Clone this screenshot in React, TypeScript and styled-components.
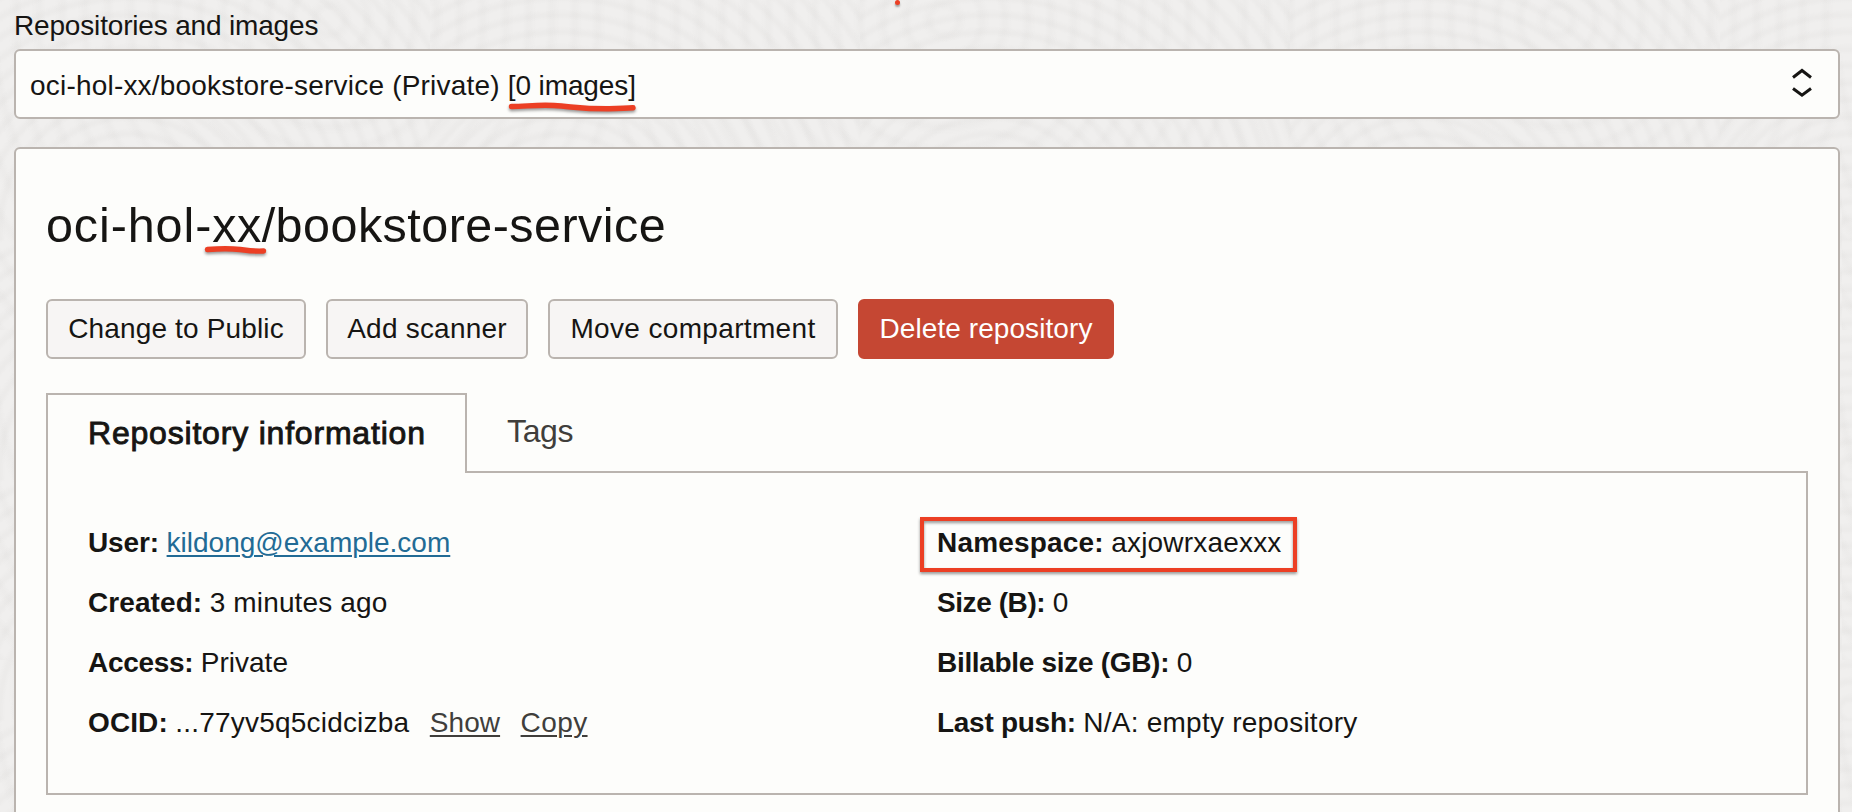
import React from 'react';
import styled, { createGlobalStyle } from 'styled-components';

const line = '#bab4af';
const ink = '#161513';
const red = '#ec3f24';

const Global = createGlobalStyle`
  *, *::before, *::after { box-sizing: border-box; }
  html, body { margin: 0; height: 812px; overflow: hidden; }
  body {
    background-color: #f0efee;
    background-image:
      repeating-radial-gradient(circle at 130px 230px, rgba(90,85,80,0) 0 6px, rgba(90,85,80,.022) 10px 12px, rgba(90,85,80,0) 17px),
      repeating-radial-gradient(circle at 330px 20px, rgba(90,85,80,0) 0 9px, rgba(90,85,80,.018) 14px 16px, rgba(90,85,80,0) 23px);
    background-size: 430px 240px, 614px 330px;
    color: ${ink};
    font: 28px/1 "Liberation Sans", Arial, sans-serif;
  }
`;

const Page = styled.main`
  display: flex;
  flex-direction: column;
  height: 812px;
  padding: 10px 12px 0 14px;
  overflow: hidden;
`;

const FieldLabel = styled.label`
  flex: none;
  height: 39px;
  line-height: 32px;
  letter-spacing: -0.17px;
`;

const Select = styled.div`
  display: flex;
  flex: none;
  align-items: flex-start;
  justify-content: space-between;
  height: 70px;
  padding: 4px 26.5px 0 14px;
  border: 2px solid ${line};
  border-radius: 6px;
  background: #fdfdfb;
  line-height: 62px;
  white-space: pre;
`;

const Text = styled.span<{ $ls?: number }>`
  letter-spacing: ${(p) => p.$ls ?? 0}px;
  white-space: pre;
`;

const Marked = styled(Text)`
  position: relative;
`;

const Scribble = styled.svg<{ $x: number; $y: number }>`
  position: absolute;
  left: ${(p) => p.$x}px;
  top: ${(p) => p.$y}px;
  overflow: visible;
  fill: none;
  stroke: ${red};
  stroke-width: 5.4px;
  stroke-linecap: round;
  filter: drop-shadow(0 2px 1.5px rgba(0, 0, 0, 0.4));
`;

const Chevrons = styled.svg`
  margin-top: 11px;
  fill: none;
  stroke: ${ink};
  stroke-width: 3px;
`;

const Card = styled.section`
  flex: none;
  height: 680px;
  margin-top: 28px;
  padding: 46px 30px 0;
  border: 2px solid ${line};
  border-radius: 6px;
  background: #fdfdfb;
`;

const Title = styled.h1`
  margin: 0 0 44px;
  font-size: 48.5px;
  font-weight: 400;
  line-height: 60px;
`;

const Actions = styled.div`
  display: flex;
  gap: 20px;
`;

const Button = styled.button<{ $width: number; $ls: number; $danger?: boolean }>`
  width: ${(p) => p.$width}px;
  height: 60px;
  padding: 0;
  border: 2px solid ${(p) => (p.$danger ? '#c54733' : line)};
  border-radius: 6px;
  background: ${(p) => (p.$danger ? '#c54733' : '#f7f5f4')};
  color: ${(p) => (p.$danger ? '#fff' : ink)};
  font: inherit;
  line-height: 56px;
  letter-spacing: ${(p) => p.$ls}px;
  white-space: nowrap;
`;

const Tabs = styled.nav`
  display: flex;
  height: 80px;
  margin-top: 34px;
  font-size: 32px;
`;

const ActiveTab = styled.div`
  position: relative;
  width: 421px;
  padding-left: 40px;
  border: 2px solid ${line};
  border-bottom: 0;
  background: #fdfdfb;
  line-height: 77px;
  letter-spacing: 0.8px;
  -webkit-text-stroke: 0.9px ${ink};
  white-space: nowrap;
`;

const Tab = styled.div`
  padding-left: 40px;
  color: #403e3b;
  line-height: 76px;
  letter-spacing: -0.36px;
`;

const Panel = styled.div`
  display: grid;
  grid-template-columns: 1fr 1fr;
  column-gap: 20px;
  height: 324px;
  margin-top: -2px;
  padding: 40px;
  border: 2px solid ${line};
`;

const Row = styled.div`
  display: flex;
  gap: 7.5px;
  height: 60px;
  line-height: 60px;
  white-space: nowrap;
`;

const Name = styled.b<{ $ls?: number }>`
  letter-spacing: ${(p) => p.$ls ?? 0}px;
`;

const Link = styled.a<{ $muted?: boolean; $ls?: number }>`
  margin-left: ${(p) => (p.$muted ? 13 : 0)}px;
  color: ${(p) => (p.$muted ? '#403e3b' : '#226b95')};
  letter-spacing: ${(p) => p.$ls ?? 0}px;
  text-decoration: underline;
  text-decoration-thickness: 2px;
  text-underline-offset: 3px;
`;

const Highlight = styled.div`
  position: absolute;
  left: -17px;
  top: 4px;
  width: 377px;
  height: 55px;
  border: 4px solid ${red};
  filter: drop-shadow(0 2px 1.5px rgba(0, 0, 0, 0.4));
`;

const HighlightedRow = styled(Row)`
  position: relative;
`;

const Dot = styled.i`
  position: absolute;
  left: 894.5px;
  top: 0;
  width: 5px;
  height: 5px;
  border-radius: 50%;
  background: ${red};
  box-shadow: 0 2px 2px rgba(0, 0, 0, 0.35);
`;

export default function App() {
  return (
    <Page>
      <Global />
      <Dot />
      <FieldLabel>Repositories and images</FieldLabel>
      <Select>
        <span>
          <Text $ls={0.2}>{'oci-hol-xx/bookstore-service (Private) '}</Text>
          <Marked $ls={-0.1}>
            [0 images]
            <Scribble $x={3} $y={33} width="124" height="8">
              <path d="M0.5 3.5C15 3.5 26 1.5 43 2.5C64 4 72 6 98 5.8C110 5.6 116 5.4 122 4.8" />
            </Scribble>
          </Marked>
        </span>
        <Chevrons width="20" height="32" viewBox="0 0 20 32">
          <path d="M1 11.5L10 4.5L19 11.5M1 22.5L10 29.2L19 22.5" />
        </Chevrons>
      </Select>
      <Card>
        <Title>
          <Text $ls={0.9}>oci-hol-</Text>
          <Marked $ls={0.46}>
            xx
            <Scribble $x={-5.5} $y={47.5} width="58" height="8">
              <path d="M0.5 3.5C10 2.8 22 2.3 33 3.5C41 4.7 48 5.4 56.5 5" />
            </Scribble>
          </Marked>
          <Text $ls={0.46}>/bookstore-service</Text>
        </Title>
        <Actions>
          <Button $width={260} $ls={0.15}>Change to Public</Button>
          <Button $width={202} $ls={0.21}>Add scanner</Button>
          <Button $width={290} $ls={0.34}>Move compartment</Button>
          <Button $width={256} $ls={0.08} $danger>Delete repository</Button>
        </Actions>
        <Tabs>
          <ActiveTab>Repository information</ActiveTab>
          <Tab>Tags</Tab>
        </Tabs>
        <Panel>
          <div>
            <Row>
              <Name $ls={-0.1}>User:</Name>
              <Link>kildong@example.com</Link>
            </Row>
            <Row>
              <Name $ls={0.08}>Created:</Name>
              <Text $ls={0.14}>3 minutes ago</Text>
            </Row>
            <Row>
              <Name $ls={-0.3}>Access:</Name>
              <Text>Private</Text>
            </Row>
            <Row>
              <Name $ls={0.1}>OCID:</Name>
              <Text $ls={0.2}>...77yv5q5cidcizba</Text>
              <Link $muted $ls={0.06}>Show</Link>
              <Link $muted $ls={0.4}>Copy</Link>
            </Row>
          </div>
          <div>
            <HighlightedRow>
              <Name $ls={0.18}>Namespace:</Name>
              <Text $ls={0.18}>axjowrxaexxx</Text>
              <Highlight />
            </HighlightedRow>
            <Row>
              <Name $ls={-0.42}>Size (B):</Name>
              <Text>0</Text>
            </Row>
            <Row>
              <Name $ls={-0.31}>Billable size (GB):</Name>
              <Text>0</Text>
            </Row>
            <Row>
              <Name $ls={-0.28}>Last push:</Name>
              <Text $ls={0.24}>N/A: empty repository</Text>
            </Row>
          </div>
        </Panel>
      </Card>
    </Page>
  );
}
